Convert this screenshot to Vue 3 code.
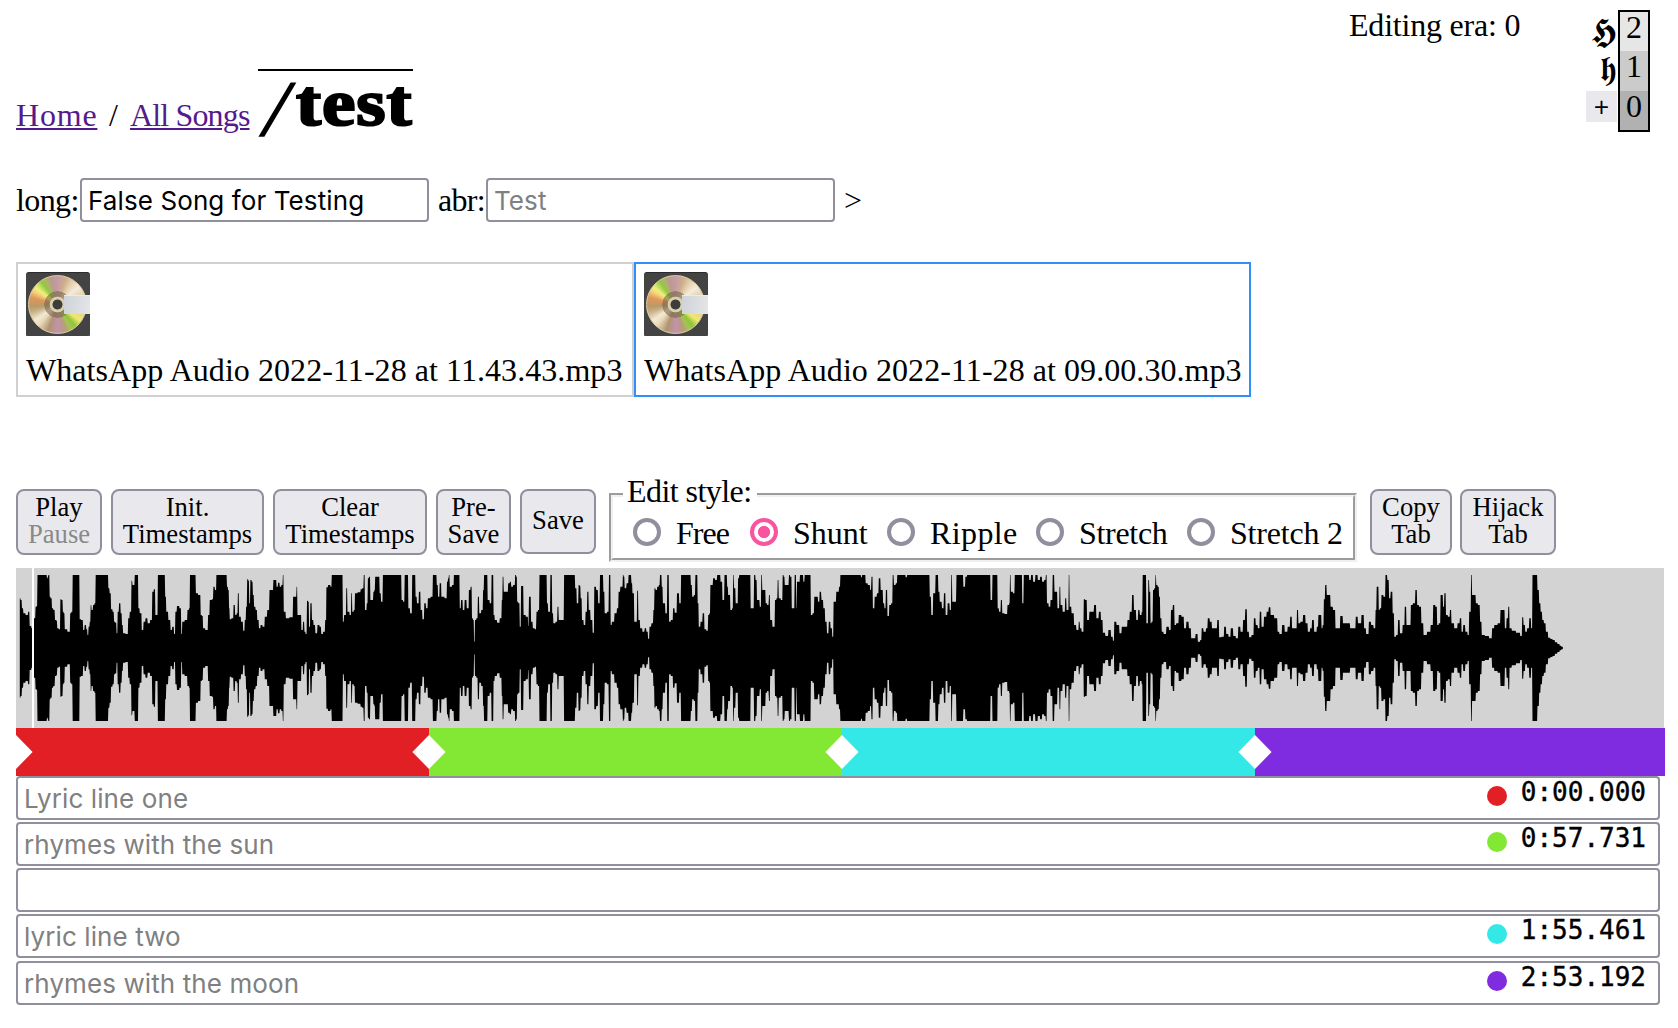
<script setup>
import { ref } from 'vue'

const title = ref('False Song for Testing')
const abbr = ref('')

const files = [
  { name: 'WhatsApp Audio 2022-11-28 at 11.43.43.mp3', selected: false },
  { name: 'WhatsApp Audio 2022-11-28 at 09.00.30.mp3', selected: true },
]

const styles = [
  { name: 'Free', width: 117, spacing: -1 },
  { name: 'Shunt', width: 137, spacing: 0 },
  { name: 'Ripple', width: 149, spacing: 0.4 },
  { name: 'Stretch', width: 151, spacing: -0.3 },
  { name: 'Stretch 2', width: 150, spacing: -0.2 },
]
const editStyle = ref('Shunt')

const lines = [
  { text: 'Lyric line one', time: '0:00.000', color: '#e31f26' },
  { text: 'rhymes with the sun', time: '0:57.731', color: '#83e833' },
  { text: '', time: '', color: '' },
  { text: 'lyric line two', time: '1:55.461', color: '#33e8e6' },
  { text: 'rhymes with the moon', time: '2:53.192', color: '#7f2be0' },
]

const bands = [
  { color: '#e31f26', width: 413 },
  { color: '#83e833', width: 413 },
  { color: '#33e8e6', width: 413 },
  { color: '#7f2be0', width: 410 },
]

// Peak chunks: start offset in px, horizontal units per px, then "x,level" pairs.
// A level of 264 is silence and 45 is a clipped peak.
const chunks = [
  {
    start: -16,
    scale: 2.8,
    data: '55,115 60,120 62,145 68,160 75,165 82,155 83,198 92,205 97,175 101,140 104,138 105,45 130,45 132,55 135,50 135,45 138,45 139,110 144,115 146,145 152,150 155,180 160,182 160,205 168,208 169,118 175,120 176,155 180,160 182,208 195,215 197,160 202,155 204,45 222,45 223,178 231,180 234,210 239,195 243,208 246,225 249,200 253,185 254,135 258,150 262,135 267,130 268,45 302,45 304,85 309,100 312,148 318,155 320,185 325,188 327,220 331,155 335,130 340,160 342,195 346,220 357,222 360,175 366,155 369,62 372,75 376,75 378,45 386,45 388,145 394,160 399,210 404,185 410,175 416,190 424,180 428,95 433,88 436,165 441,165 442,45 461,45 463,110 467,155 475,180 479,210 485,200 489,222 492,155 498,138 506,145 508,222 512,185 522,180 527,150 531,145 532,45 547,45 549,100 560,105 563,165 567,168 569,205 580,210 584,165 590,120 596,118 598,80 605,90 606,45 634,45 636,80 640,90 642,145 644,178 652,175 655,135 661,165 664,160 667,100 671,170 678,185 683,212 687,180 690,140 693,58 697,62 698,130 703,60 706,65 709,105 713,140 718,150 722,180 727,205 732,195 738,200 744,170 752,150 756,90 763,90 767,60 773,60 775,80 781,68 785,80 790,75 793,45 795,155 805,175 815,172 825,110 829,110 831,80 834,165 842,165 845,210 851,185 853,215 858,222 860,122 864,125 866,200 871,130 875,180 880,195 885,220 892,195 897,200 901,222 908,215 912,180 915,82 922,75 928,80 929,45 958,45 961,185 965,165 968,165 970,85 975,155 982,165 984,100 988,155 993,150 994,100 1008,97 1011,88 1017,85 1019,45 1024,150 1029,130 1030,55 1036,50 1037,120 1044,120 1046,95 1050,90 1050,50 1062,50 1063,100 1070,125 1073,45 1123,45 1125,120 1132,125 1133,45 1142,45 1144,145 1152,160 1155,45 1162,45 1164,110 1170,130 1175,95 1180,150 1185,178 1190,130 1195,145 1200,115 1211,110 1212,45 1222,45 1223,75 1229,110 1232,70 1239,110 1250,115 1252,65 1256,55 1257,45 1261,80 1270,75 1271,45 1286,45 1288,145 1293,120 1298,150 1303,120 1310,145 1315,90 1320,80 1322,175 1326,180 1328,245 1331,180 1336,175 1339,110 1344,160 1350,150 1354,90 1356,45 1363,45 1367,120 1375,130 1377,45 1381,45 1382,165 1388,180 1395,188 1403,175 1406,120 1408,50 1412,95 1420,95 1425,70 1430,65 1432,80 1441,75 1443,45 1447,50 1448,125 1454,130 1456,200 1461,78 1465,78 1466,165 1478,170 1479,198 1482,110 1485,110 1488,185 1495,205 1500,208 1503,155 1509,150 1511,45 1512,45',
  },
  {
    start: 524,
    scale: 2.8,
    data: '0,45 18,45 20,130 25,155 28,155 29,45 33,45 34,160 40,190 47,185 50,140 54,180 66,180 68,45 97,45 99,85 106,130 109,75 113,78 114,115 120,180 124,195 130,155 134,95 138,150 144,180 150,218 153,80 161,90 164,130 167,130 168,45 176,45 178,95 183,160 192,155 193,45 197,45 198,195 204,185 212,160 218,145 221,95 228,80 231,80 232,45 236,50 237,85 247,70 248,45 255,45 256,70 261,100 266,185 270,185 273,92 277,180 283,205 290,215 295,205 300,215 304,236 308,200 315,190 319,150 321,85 326,90 330,80 335,75 336,45 340,45 341,80 346,130 355,160 357,45 360,45 362,185 370,180 374,145 380,158 386,100 393,130 396,45 420,45 424,75 427,110 434,105 435,45 440,45 442,130 446,200 452,185 458,160 462,208 469,212 472,165 476,160 477,75 483,75 485,55 495,60 496,45 504,45 506,65 510,65 511,120 516,120 516,45 523,45 524,80 529,105 536,150 540,145 541,45 545,85 550,130 553,130 555,55 560,45 588,45 591,145 598,145 600,45 606,60 608,120 613,120 617,140 621,45 623,90 630,90 633,130 639,135 642,105 646,180 655,200 660,120 664,115 666,60 670,115 678,120 680,45 684,50 686,75 696,75 697,45 703,50 706,145 712,145 713,45 716,45 718,145 720,65 727,65 728,45 736,45 738,65 743,45 757,45 759,165 767,160 768,110 776,110 780,125 785,95 790,120 796,145 800,185 806,220 810,185 816,205 820,230 823,125 828,125 830,95 836,95 838,80 843,45 897,45 900,52 903,45 910,45 913,70 922,75 926,90 929,50 934,145 939,110 947,100 949,55 958,90 962,130 966,145 970,90 975,168 980,135 986,130 988,45 993,75 999,70 1001,45 1022,45 1025,52 1030,45 1090,45 1092,110 1098,165 1103,100 1107,100 1107,45 1114,45 1116,95 1122,125 1128,145 1133,100 1138,165 1144,130 1150,150 1152,45 1156,125 1165,125 1166,45 1184,45 1186,80 1190,80 1191,50 1200,45 1260,45 1262,120 1266,120 1267,45 1280,45 1282,145 1288,155 1292,120 1296,160 1305,162 1312,135 1315,130 1316,45 1320,95 1328,100 1330,45 1349,45 1351,130 1353,130 1355,45 1368,45 1371,60 1378,45 1383,65 1390,45 1397,60 1403,50 1408,65 1415,60 1417,45 1421,130 1427,140 1431,120 1434,120 1436,45 1444,95 1453,145 1455,80 1459,135 1467,155 1473,115 1475,150 1479,150 1481,45 1484,140 1492,160 1498,195 1505,210 1511,185 1512,200',
  },
  {
    start: 1064,
    scale: 2.622,
    data: '0,205 8,215 11,118 16,120 20,180 28,155 34,155 39,135 46,175 52,155 57,180 62,218 70,228 78,210 84,230 88,242 91,185 100,195 106,220 112,200 122,200 126,180 134,155 138,105 144,150 150,180 154,150 159,165 164,155 164,45 173,45 174,190 178,190 179,60 184,95 185,190 190,185 192,90 197,85 198,45 201,75 206,80 208,110 212,175 216,215 222,222 230,200 236,210 240,150 246,135 249,195 255,190 262,165 270,170 275,205 282,185 288,205 294,235 300,235 305,222 312,245 318,240 319,205 328,215 332,205 337,175 343,185 348,205 357,205 362,180 367,232 375,230 380,200 386,222 392,230 398,205 405,228 412,235 417,200 424,215 430,180 436,148 440,215 446,232 453,225 458,175 463,195 469,205 473,155 478,200 486,170 492,155 497,142 502,165 516,175 519,215 526,222 533,195 540,215 548,200 553,170 558,205 567,205 570,150 574,190 581,185 588,165 594,190 600,215 606,205 610,180 617,215 624,200 625,165 632,165 634,205 638,195 640,118 645,75 648,105 655,105 658,140 668,150 671,205 680,205 684,168 694,190 704,190 712,205 720,205 725,170 732,190 743,165 746,205 754,222 760,185 766,195 773,205 776,150 779,80 782,80 784,150 788,145 792,105 799,110 802,45 809,60 811,115 817,95 822,160 825,230 832,225 835,180 842,220 849,195 853,140 858,195 865,195 869,135 876,130 882,90 885,135 892,140 897,190 904,225 915,215 923,195 928,135 935,140 937,195 944,190 946,105 950,105 953,140 957,100 961,165 968,170 971,150 976,190 986,205 993,190 998,175 1002,215 1007,195 1013,215 1019,225 1021,155 1024,155 1026,45 1029,105 1036,105 1039,130 1047,135 1050,185 1056,225 1067,228 1078,235 1082,205 1090,195 1100,190 1104,150 1112,150 1115,205 1121,175 1124,140 1128,205 1136,212 1150,218 1158,228 1160,172 1165,195 1169,215 1175,205 1180,175 1185,205 1187,45 1197,45 1201,90 1206,130 1209,155 1214,180 1218,190 1224,215 1230,233 1236,237 1242,240 1248,247 1255,252 1260,257 1264,260 1268,264',
  },
]

const peaks = chunks.flatMap(({ start, scale, data }) =>
  data.split(' ').map((pair) => {
    const [x, level] = pair.split(',').map(Number)
    return [start + x / scale, (264 - level) / 3]
  }),
)

// Hold every peak up to the midpoint between it and its neighbours.
const columns = peaks.flatMap(([x, a], i) => {
  const from = i ? (peaks[i - 1][0] + x) / 2 : x
  const to = i < peaks.length - 1 ? (peaks[i + 1][0] + x) / 2 : x
  return [[from + 0.2, a], [to - 0.2, a]]
})
const upper = columns.map(([x, a]) => `${x.toFixed(1)},${(80 - a).toFixed(1)}`)
const lower = [...columns].reverse().map(([x, a]) => `${x.toFixed(1)},${(80 + a).toFixed(1)}`)
const waveform = [...upper, ...lower].join(' ')
</script>

<template>
  <div class="page">
    <header>
      <nav class="crumbs">
        <a class="home" href="#">Home</a>
        <span class="sep">/</span>
        <a class="all" href="#">All Songs</a>
        <h1><span class="slash">/</span><span class="word">test</span></h1>
      </nav>
      <div class="era">Editing era: 0</div>
      <div class="tools">
        <span class="big">𝕳</span>
        <span class="small">𝖍</span>
        <button class="plus">+</button>
      </div>
      <div class="eras">
        <span>2</span>
        <span>1</span>
        <span>0</span>
      </div>
    </header>

    <div class="names">
      <label class="long">long:</label>
      <input v-model="title" class="field" type="text" />
      <label class="abr">abr:</label>
      <input v-model="abbr" class="field" type="text" placeholder="Test" />
      <span class="more">&gt;</span>
    </div>

    <div class="files">
      <div v-for="f in files" :key="f.name" class="file" :class="{ selected: f.selected }">
        <div class="minidisc">
          <div class="disc"></div>
          <div class="hub"></div>
          <div class="shutter"></div>
        </div>
        <div class="filename">{{ f.name }}</div>
      </div>
    </div>

    <div class="toolbar">
      <button class="btn play">Play<br /><span class="dim">Pause</span></button>
      <button class="btn init">Init.<br />Timestamps</button>
      <button class="btn clear">Clear<br />Timestamps</button>
      <button class="btn pre">Pre-<br />Save</button>
      <button class="btn save">Save</button>
      <fieldset>
        <legend>Edit style:</legend>
        <div class="options">
          <label
            v-for="s in styles"
            :key="s.name"
            :style="{ width: s.width + 'px', letterSpacing: s.spacing + 'px' }"
          >
            <input v-model="editStyle" type="radio" name="style" :value="s.name" />
            <span>{{ s.name }}</span>
          </label>
        </div>
      </fieldset>
      <button class="btn copy">Copy<br />Tab</button>
      <button class="btn hijack">Hijack<br />Tab</button>
    </div>

    <div class="wave">
      <svg width="1648" height="160" viewBox="0 0 1648 160">
        <polygon :points="waveform" />
        <rect x="16" y="0" width="2" height="160" fill="#fff" />
      </svg>
    </div>

    <div class="bands">
      <div
        v-for="b in bands"
        :key="b.color"
        class="band"
        :style="{ background: b.color, width: b.width + 'px' }"
      >
        <svg class="handle" width="34" height="34" viewBox="0 0 34 34">
          <path d="M17 0 33.6 17 17 34 .4 17z" fill="#fff" />
        </svg>
      </div>
    </div>

    <div class="lyrics">
      <div v-for="(l, i) in lines" :key="i" class="line">
        <input type="text" :placeholder="l.text" />
        <div v-if="l.time" class="stamp">
          <i :style="{ background: l.color }"></i>
          <span>{{ l.time }}</span>
        </div>
      </div>
    </div>
  </div>
</template>

<style>
body {
  margin: 0;
  background: #fff;
}
</style>

<style scoped>
* {
  box-sizing: border-box;
}
.page {
  width: 1678px;
  height: 1028px;
  padding-left: 16px;
  overflow: hidden;
  font: 32px/36px 'Liberation Serif', serif;
  color: #000;
}
header {
  display: flex;
  align-items: flex-start;
  height: 178px;
}
.crumbs {
  display: flex;
  align-items: baseline;
  width: 1333px;
  padding-top: 69px;
}
.crumbs a {
  color: #551a8b;
  text-decoration-thickness: 2px;
  text-underline-offset: 2px;
}
.home {
  width: 81px;
  letter-spacing: 0.8px;
}
.sep {
  width: 33px;
  text-align: center;
}
.all {
  width: 119px;
  letter-spacing: -0.85px;
  white-space: nowrap;
}
h1 {
  display: flex;
  width: 155px;
  margin: 0 0 0 9px;
  border-top: 2px solid #000;
  font-size: 66px;
  line-height: 64px;
  font-weight: bold;
}
.slash {
  width: 38px;
  padding-left: 8px;
  font-size: 78px;
  line-height: 57px;
  font-weight: normal;
  -webkit-text-stroke: 2px #000;
  transform: translateY(9px) skewX(-14deg);
}
.word {
  letter-spacing: 0.8px;
  -webkit-text-stroke: 2.2px #000;
  transform: scaleX(1.14);
  transform-origin: 0 50%;
}
.era {
  width: 237px;
  padding-top: 7px;
  letter-spacing: -0.2px;
}
.tools {
  display: flex;
  flex-direction: column;
  align-items: flex-end;
  width: 31px;
  padding-top: 12px;
  font-family: 'DejaVu Sans', 'Liberation Serif', serif;
}
.tools span {
  height: 40px;
  line-height: 37px;
  font-size: 36px;
}
.tools .small {
  height: 39px;
  line-height: 35px;
  font-size: 34px;
}
.plus {
  width: 31px;
  height: 31px;
  padding: 0;
  border: 0;
  background: #e9e9ed;
  color: #000;
  font: 27px/27px 'Open Sans', sans-serif;
}
.eras {
  display: flex;
  flex-direction: column;
  width: 32px;
  height: 122px;
  margin: 10px 0 0 1px;
  border: 2px solid #000;
  text-align: center;
  line-height: 31px;
}
.eras span {
  height: 39px;
  background: #e6e6e6;
}
.eras span:nth-child(2) {
  height: 40px;
  background: #cbcbcb;
}
.eras span:nth-child(3) {
  background: #b1b1b1;
}
.names {
  display: flex;
  align-items: center;
  height: 44px;
}
.long {
  width: 64px;
  letter-spacing: -0.6px;
}
.abr {
  width: 48px;
  margin-left: 9px;
  letter-spacing: -0.7px;
}
.field,
.line input {
  height: 44px;
  padding: 1px 6px 0;
  border: 2px solid #8f8f9d;
  border-radius: 4px;
  background: #fff;
  font: 26px/36px Inter, sans-serif;
  letter-spacing: 0.1px;
  color: #000;
  outline: 0;
}
.field {
  width: 349px;
}
input::placeholder {
  color: #808080;
  opacity: 1;
}
.more {
  margin-left: 9px;
}
.files {
  display: flex;
  height: 135px;
  margin-top: 40px;
}
.file {
  width: 618px;
  padding: 8px;
  border: 2px solid #d0d0d0;
}
.file.selected {
  border-color: #2f90f8;
  width: 617px;
}
.minidisc {
  position: relative;
  width: 64px;
  height: 64px;
  border-radius: 3px 3px 1px 1px;
  background: #434343;
  border-top: 1px solid #2b2b2b;
}
.disc {
  position: absolute;
  left: 2px;
  top: 2px;
  width: 59px;
  height: 59px;
  border-radius: 50%;
  border: 1px solid #ddd2a6;
  background: conic-gradient(#c79aa6, #cfae8c 18deg, #e0cba6 30deg, #f6ecdc 50deg, #e3d1ae 70deg, #cdb78c 95deg, #efe07a 118deg, #efe86e 126deg, #8fc53c 140deg, #a4c455 152deg, #b99c7a 162deg, #c293ad 180deg, #b09470 200deg, #e9dabb 222deg, #f3e9d4 235deg, #c5ad82 255deg, #b89a69 265deg, #e0965a 285deg, #f1d77a 300deg, #f4ee7c 308deg, #8fca42 325deg, #b1b468 335deg, #b99a90 345deg, #c79aa6);
}
.hub {
  position: absolute;
  left: 18px;
  top: 18px;
  width: 27px;
  height: 27px;
  border-radius: 50%;
  background: radial-gradient(circle, #3d3d3b 0 4.7px, #d8d0ac 5.3px 7.5px, rgba(112, 94, 70, 0.55) 8.2px 13px, transparent 13.5px);
}
.shutter {
  position: absolute;
  right: 0;
  top: 22px;
  width: 26px;
  height: 19px;
  background: linear-gradient(100deg, #cfd2d6, #e4e6e9);
  border-top: 1px solid #e9eaec;
}
.filename {
  margin-top: 16px;
  white-space: nowrap;
  letter-spacing: 0.06px;
}
.toolbar {
  display: flex;
  align-items: flex-start;
  height: 79px;
  margin-top: 92px;
}
.btn {
  flex: none;
  height: 66px;
  padding: 0 0 3px;
  margin-right: 9px;
  border: 2px solid #8f8f9d;
  border-radius: 8px;
  background: #e9e9ed;
  font: 26.67px/27px 'Liberation Serif', serif;
  color: #000;
}
.dim {
  color: #8a8a8a;
}
.play {
  width: 86px;
}
.init {
  width: 153px;
}
.clear {
  width: 154px;
}
.pre {
  width: 75px;
}
.save {
  width: 76px;
  height: 65px;
  margin-right: 13px;
}
.copy {
  width: 82px;
  margin-right: 8px;
}
.hijack {
  width: 96px;
  margin: 0;
}
fieldset {
  flex: none;
  width: 748px;
  height: 85px;
  margin: -12px 13px 0 0;
  padding: 0 0 0 20px;
  border: 4px groove #f0f0f0;
}
legend {
  width: 134px;
  height: 36px;
  margin-left: -10px;
  padding: 0 6px 0 4px;
  line-height: 28px;
  letter-spacing: -0.55px;
  white-space: nowrap;
}
.options {
  display: flex;
  height: 36px;
  margin-top: 1px;
}
.options label {
  display: flex;
  align-items: center;
  white-space: nowrap;
}
.options span {
  padding-top: 1px;
}
.options input {
  appearance: none;
  flex: none;
  width: 28px;
  height: 28px;
  margin: 0 15px 0 0;
  border: 4px solid #8f8f9d;
  border-radius: 50%;
  background: #fff;
}
.options input:checked {
  border-color: #f8549f;
  background: radial-gradient(circle, #f8549f 0 5.7px, #fff 6.4px);
}
.wave {
  width: 1648px;
  height: 160px;
  background: #d3d3d3;
}
.wave svg {
  display: block;
}
.bands {
  display: flex;
  width: 1649px;
  height: 48px;
}
.band {
  position: relative;
  flex: none;
}
.band:first-child {
  overflow: hidden;
}
.handle {
  position: absolute;
  left: -17px;
  top: 7px;
}
.line {
  position: relative;
  height: 44px;
  margin-bottom: 2px;
}
.line:nth-child(4) {
  margin-bottom: 3px;
}
.line input {
  display: block;
  width: 1644px;
}
.stamp {
  position: absolute;
  right: 32px;
  top: 0;
  display: flex;
  align-items: flex-start;
  font: 26px/32px 'DejaVu Sans Mono', monospace;
  -webkit-text-stroke: 0.4px #000;
}
.stamp i {
  width: 20px;
  height: 20px;
  margin: 10px 14px 0 0;
  border-radius: 50%;
}
</style>
